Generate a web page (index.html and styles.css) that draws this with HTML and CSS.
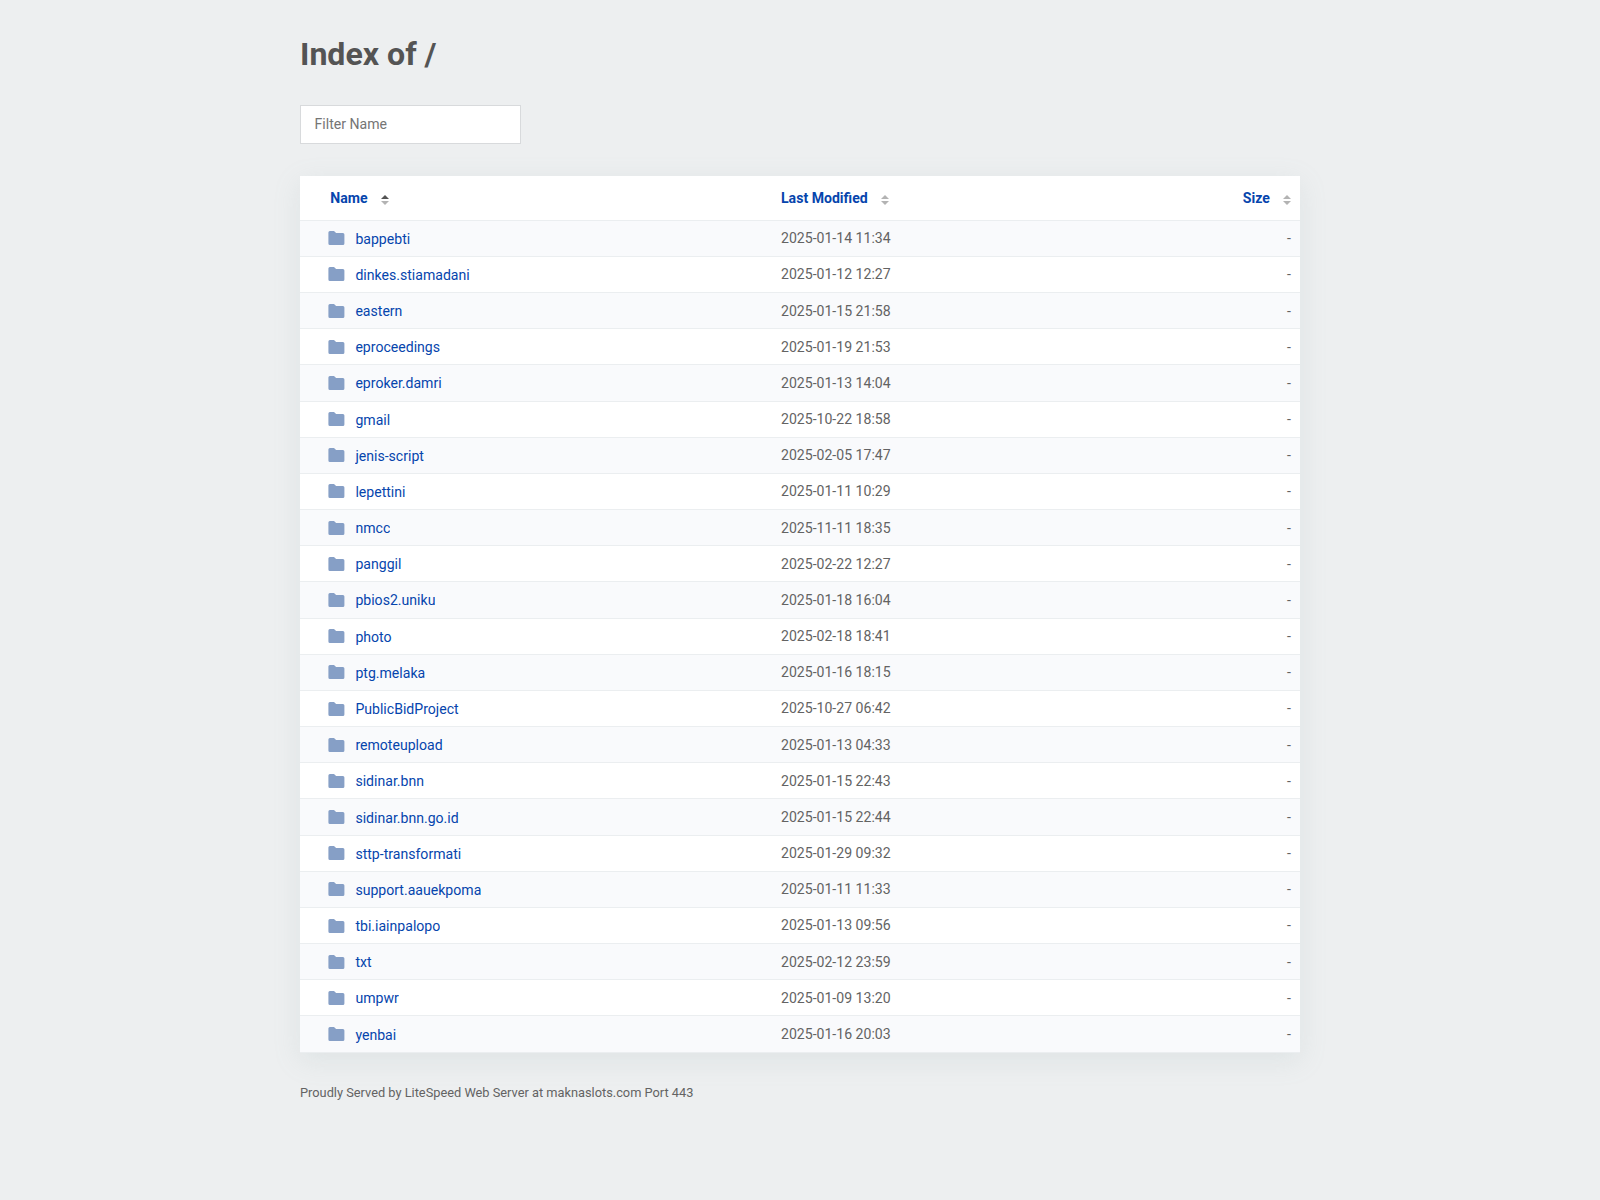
FILE: index.html
```html
<!DOCTYPE html>
<html lang="en">
<head>
<meta charset="utf-8">
<title>Index of /</title>
<link rel="stylesheet" href="styles.css">
</head>
<body>
<svg width="0" height="0" class="defs">
  <symbol id="folder" viewBox="0 0 17 16"><path d="M1.9 1H6l2.1 2H14.900q1.500 0 1.500 1.500V13.500q0 1.500-1.500 1.500H1.900q-1.500 0-1.500-1.500V2.500Q.4 1 1.900 1z"/></symbol>
</svg>
<main class="content">
  <h1>Index of /</h1>
  <input class="filter" type="text" placeholder="Filter Name">
  <table class="listing">
    <thead>
      <tr><th class="name">Name<span class="sort asc"></span></th><th class="date">Last Modified<span class="sort"></span></th><th class="size">Size<span class="sort"></span></th></tr>
    </thead>
    <tbody id="rows"></tbody>
  </table>
  <footer>Proudly Served by LiteSpeed Web Server at maknaslots.com Port 443</footer>
</main>
<script src="listing.js"></script>
</body>
</html>
```
FILE: listing.js
```js
const entries = [
  ["bappebti", "2025-01-14 11:34"],
  ["dinkes.stiamadani", "2025-01-12 12:27"],
  ["eastern", "2025-01-15 21:58"],
  ["eproceedings", "2025-01-19 21:53"],
  ["eproker.damri", "2025-01-13 14:04"],
  ["gmail", "2025-10-22 18:58"],
  ["jenis-script", "2025-02-05 17:47"],
  ["lepettini", "2025-01-11 10:29"],
  ["nmcc", "2025-11-11 18:35"],
  ["panggil", "2025-02-22 12:27"],
  ["pbios2.uniku", "2025-01-18 16:04"],
  ["photo", "2025-02-18 18:41"],
  ["ptg.melaka", "2025-01-16 18:15"],
  ["PublicBidProject", "2025-10-27 06:42"],
  ["remoteupload", "2025-01-13 04:33"],
  ["sidinar.bnn", "2025-01-15 22:43"],
  ["sidinar.bnn.go.id", "2025-01-15 22:44"],
  ["sttp-transformati", "2025-01-29 09:32"],
  ["support.aauekpoma", "2025-01-11 11:33"],
  ["tbi.iainpalopo", "2025-01-13 09:56"],
  ["txt", "2025-02-12 23:59"],
  ["umpwr", "2025-01-09 13:20"],
  ["yenbai", "2025-01-16 20:03"]
];
document.getElementById("rows").innerHTML = entries.map(([name, date]) =>
  `<tr><td class="name"><a href="#"><svg class="icon"><use href="#folder"/></svg><span class="label">${name}</span></a></td><td class="date">${date}</td><td class="size">-</td></tr>`
).join("");
```
FILE: styles.css
```css
* { box-sizing: border-box; }
body {
  margin: 0;
  background: #edeff0;
  color: #636363;
  font: 14.08px/16px Roboto, sans-serif;
}
.defs { display: block; }
.content { width: 1000px; margin: 0 auto; padding-top: 35px; }
h1 { margin: 0; color: #545454; font-size: 32.1px; line-height: 38px; font-weight: 700; }
.filter {
  display: block;
  width: 221px;
  height: 39px;
  margin: 32px 0;
  padding: 0 13.5px 2px;
  border: 1px solid #d8dadc;
  border-radius: 0;
  font: inherit;
  color: #545454;
  background: #fff;
}
.filter::placeholder { color: #757575; }
.listing {
  width: 100%;
  table-layout: fixed;
  border-collapse: separate;
  border-spacing: 0;
  background: #fff;
  box-shadow: 0 7px 25px 0 rgba(149, 172, 172, .17);
}
th, td { padding: 0; text-align: left; border-bottom: 1px solid #ebeef0; }
th { height: 44.7px; color: #0645ad; font-weight: 700; }
td { height: 36.18px; }
tbody tr:nth-child(odd) { background: #f9fafc; }
th.name { width: 481px; padding-left: 30.3px; }
td.date, td.size { padding-bottom: .12px; }
td.name { padding: 1px 0 0 28px; }
th.size, td.size { width: 260px; padding-right: 9px; text-align: right; }
.name a { display: flex; align-items: center; height: 16px; color: #0645ad; text-decoration: none; }
.label { height: 16px; overflow: hidden; }
.icon { width: 17px; height: 16px; margin: -1px 10.4px 0 0; fill: #869fc6; }
.sort {
  display: inline-flex;
  flex-direction: column;
  gap: 2px;
  width: 8px;
  height: 10px;
  margin: 2px 0 0 13.2px;
  vertical-align: middle;
}
.sort::before, .sort::after { content: ""; border: 4px solid transparent; }
.sort::before { border-top: 0; border-bottom-color: #b3b3b3; }
.sort::after { border-bottom: 0; border-top-color: #b3b3b3; }
.sort.asc::before { border-bottom-color: #545454; }
footer { margin-top: 32px; font-size: 12.8px; }
```
